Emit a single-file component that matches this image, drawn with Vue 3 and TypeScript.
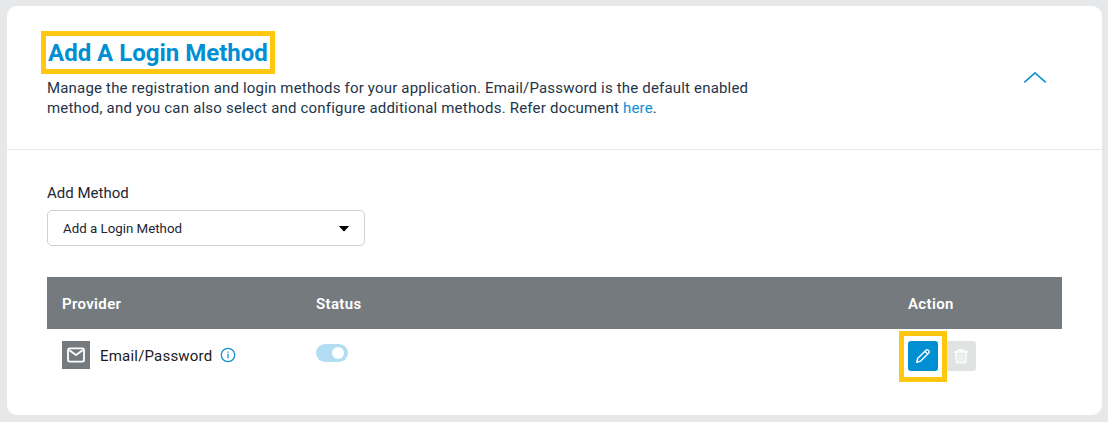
<script setup lang="ts">
import { ref } from 'vue'

interface Provider {
  name: string
  enabled: boolean
}

const open = ref(true)
const providers = ref<Provider[]>([{ name: 'Email/Password', enabled: true }])
</script>

<template>
  <main class="page">
    <section class="card">
      <header class="head">
        <div class="intro">
          <h1 class="title"><span>Add A Login Method</span></h1>
          <p class="desc">
            <span class="line first">Manage the registration and login methods for your application. Email/Password is the default enabled</span>
            <span class="line second">method, and you can also select and configure additional methods. Refer document <a class="link">here</a>.</span>
          </p>
        </div>
        <button class="collapse" type="button" aria-label="Toggle section" @click="open = !open">
          <svg width="24" height="14" viewBox="0 0 24 14" fill="none" stroke="#108fd3" stroke-width="1.6">
            <path d="M1.3 12.3 12 2.8l10.7 9.5" />
          </svg>
        </button>
      </header>
      <div v-if="open" class="body">
        <div class="label"><span>Add Method</span></div>
        <div class="select">
          <span class="value">Add a Login Method</span>
          <svg width="12" height="6" viewBox="0 0 12 6"><path d="M.8 0h10.4L6.6 5.1q-.6.6-1.2 0z" fill="#000" /></svg>
        </div>
        <div class="table">
          <div class="row thead">
            <span class="th provider">Provider</span>
            <span class="th status">Status</span>
            <span class="th action">Action</span>
          </div>
          <div v-for="p in providers" :key="p.name" class="row item">
            <div class="cell">
              <span class="mail">
                <svg width="18" height="16" viewBox="0 0 18 16" fill="none" stroke="#fff" stroke-width="1.8" stroke-linejoin="round">
                  <rect x="1" y="1.4" width="16" height="13.2" rx="1.6" />
                  <path d="m2 3 7 5 7-5" />
                </svg>
              </span>
              <span class="name">{{ p.name }}</span>
              <svg class="info" width="16" height="16" viewBox="0 0 16 16" fill="none" stroke="#108fd3">
                <circle cx="8" cy="8" r="6.7" stroke-width="1.3" />
                <path d="M8 6.8v4.5" stroke-width="1.3" />
                <path d="M8 4.4v1.4" stroke-width="1.3" />
              </svg>
            </div>
            <div class="cell">
              <span class="toggle" :class="{ on: p.enabled }"><i class="knob"></i></span>
            </div>
            <div class="cell actions">
              <span class="focus">
                <button class="btn edit" type="button" aria-label="Edit">
                  <svg width="16" height="16" viewBox="0 0 16 16" fill="none" stroke="#fff" stroke-width="1.4" stroke-linejoin="round">
                    <path d="m1.7 14.3 1.1-4 8.4-8.2q.8-.8 1.7-.1l1.1 1.1q.8.9 0 1.7l-8.3 8.3zM10 3.4l2.7 2.7" />
                    <path d="m1.3 14.7.9-2.7 1.8 1.8z" fill="#fff" stroke="none" />
                  </svg>
                </button>
              </span>
              <button class="btn trash" type="button" aria-label="Delete" disabled>
                <svg width="14" height="15" viewBox="0 0 14 15" fill="none" stroke="#fafafa">
                  <path d="M0 3h14M4.5 3V1h5v2" stroke-width="2" />
                  <path d="m2.2 4 .4 9.5h8.8l.4-9.5" stroke-width="2" />
                  <path d="M5.2 5v7M7 5v7M8.8 5v7" stroke-width="1" />
                </svg>
              </button>
            </div>
          </div>
        </div>
      </div>
    </section>
  </main>
</template>

<style>
body {
  margin: 0;
  background: #e7e8ea;
}
</style>

<style scoped>
.page {
  box-sizing: border-box;
  height: 422px;
  padding: 6px 6px 7px 7px;
  background: #e7e8ea;
  color: #24344a;
  font-family: Roboto, "Liberation Sans", sans-serif;
  font-weight: 400;
}
.card {
  height: 409px;
  border-radius: 10px;
  background: #fff;
}
.head {
  box-sizing: border-box;
  height: 144px;
  display: flex;
  justify-content: space-between;
  padding: 25px 55px 0 34px;
  border-bottom: 1px solid #e7e8ea;
}
.title {
  box-sizing: border-box;
  width: 234px;
  height: 43px;
  margin: 0;
  padding-left: 2px;
  border: 5px solid #ffc70f;
  color: #008fd3;
  font-size: 24px;
  line-height: 35px;
  font-weight: 700;
  letter-spacing: 0;
  white-space: nowrap;
}
.desc {
  margin: 4px 0 0 6px;
  font-size: 15px;
  line-height: 20px;
}
.line {
  display: block;
  white-space: nowrap;
}
.first {
  letter-spacing: 0.18px;
}
.second {
  letter-spacing: 0.2px;
}
.link {
  color: #108fd3;
}
.collapse {
  align-self: flex-start;
  width: 24px;
  height: 14px;
  margin-top: 39px;
  padding: 0;
  border: 0;
  background: none;
}
.collapse svg {
  display: block;
}
.body {
  padding: 33px 40px 0;
}
.label {
  height: 20px;
  color: #1c2531;
  font-size: 15px;
  line-height: 20px;
}
.select {
  box-sizing: border-box;
  display: flex;
  align-items: center;
  justify-content: space-between;
  width: 318px;
  height: 36px;
  margin-top: 7px;
  padding: 1px 14px 0 15px;
  border: 1px solid #d0d0d0;
  border-radius: 5px;
  color: #1c2531;
  font-size: 13.3px;
}
.table {
  margin-top: 31px;
}
.row {
  display: grid;
  grid-template-columns: 254px 592px 1fr;
  padding-left: 15px;
}
.thead {
  height: 52px;
  align-items: center;
  background: #757a7e;
  color: #fff;
  font-size: 15px;
  font-weight: 600;
  letter-spacing: 0.35px;
}
.th {
  padding-top: 1px;
}
.item {
  padding-top: 2px;
}
.cell {
  display: flex;
  align-items: flex-start;
}
.mail {
  display: flex;
  align-items: center;
  justify-content: center;
  width: 28px;
  height: 28px;
  margin-top: 10px;
  background: #757a7e;
}
.name {
  width: 112px;
  margin: 15px 0 0 10px;
  color: #1a1a1a;
  font-size: 15px;
  line-height: 20px;
  letter-spacing: 0.2px;
}
.info {
  margin: 16px 0 0 8px;
}
.toggle {
  box-sizing: border-box;
  display: flex;
  width: 32px;
  height: 18px;
  margin-top: 13px;
  padding: 3px 4px;
  border-radius: 9px;
  background: #b2ddf2;
}
.toggle.on {
  justify-content: flex-end;
}
.knob {
  width: 12px;
  height: 12px;
  border-radius: 50%;
  background: #fff;
}
.focus {
  box-sizing: border-box;
  flex: none;
  width: 48px;
  height: 51px;
  margin-left: -9px;
  padding: 5px 4px;
  border: 5px solid #ffc70f;
}
.btn {
  display: flex;
  align-items: center;
  justify-content: center;
  width: 30px;
  height: 30px;
  padding: 0;
  border: 0;
  border-radius: 3px;
}
.edit {
  background: #008fd3;
}
.trash {
  width: 29px;
  margin-top: 10px;
  padding-right: 1px;
  border-radius: 0 3px 3px 0;
  background: #e1e3e3;
}
</style>
